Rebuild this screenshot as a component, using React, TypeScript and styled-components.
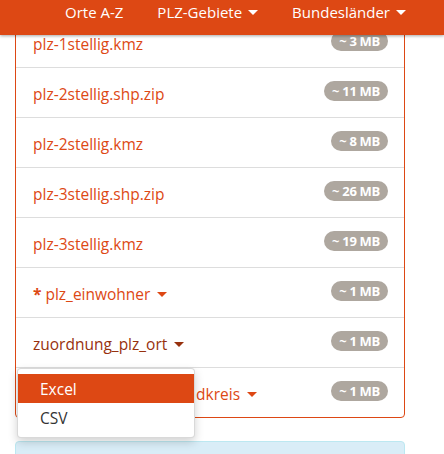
import styled, { createGlobalStyle } from "styled-components";

const GlobalStyle = createGlobalStyle`
    html, body {
        margin: 0;
        padding: 0;
        overflow: hidden;
        background: #fff;
    }
    body {
        font-family: "Open Sans", "DejaVu Sans", sans-serif;
        font-size: 15.5px;
    }
`

const Page = styled.div`
    position: relative;
    width: 444px;
    height: 454px;
    overflow: hidden;
`

const Navbar = styled.nav`
    position: absolute;
    top: 0;
    left: 0;
    right: 0;
    height: 35px;
    background: #dd4814;
    box-shadow: 0 1px 3px rgba(0, 0, 0, 0.35);
    display: flex;
    justify-content: flex-end;
    align-items: center;
    padding-right: 38px;
    gap: 34px;
    z-index: 10;
`

const NavItem = styled.a`
    color: #fff;
    font-size: 15px;
    font-weight: 500;
    display: flex;
    align-items: center;
    gap: 6px;
    margin-top: -11px;
`

const Caret = styled.span<{ $color: string }>`
    display: inline-block;
    width: 0;
    height: 0;
    border-top: 5px solid ${p => p.$color};
    border-left: 5px solid transparent;
    border-right: 5px solid transparent;
`

const Content = styled.div`
    padding: 17px 39px 0 15px;
    display: flex;
    flex-direction: column;
    gap: 23px;
`

const Panel = styled.div`
    border: 1px solid #dd4814;
    border-radius: 0 0 4px 4px;
`

const Row = styled.div`
    position: relative;
    height: 49px;
    padding: 0 16px 0 17px;
    display: flex;
    align-items: center;
    justify-content: space-between;

    & + & {
        border-top: 1px solid #dddddd;
    }
`

const FileLink = styled.a<{ $active?: boolean }>`
    color: ${p => p.$active ? "#97310e" : "#dd4814"};
    display: flex;
    align-items: center;
    gap: 7px;
    margin-top: 3px;
`

const Star = styled.b`
    margin-right: -3px;
`

const Badge = styled.span`
    background: #aea79f;
    color: #fff;
    font-size: 13px;
    font-weight: 700;
    border-radius: 10px;
    height: 20px;
    padding: 0 8px;
    display: flex;
    align-items: center;
    margin-top: -4px;
    letter-spacing: -0.3px;
`

const Menu = styled.ul`
    position: absolute;
    left: 1px;
    top: 50px;
    width: 176px;
    margin: 0;
    padding: 5px 0;
    list-style: none;
    background: #fff;
    border: 1px solid rgba(0, 0, 0, 0.15);
    border-radius: 4px;
    box-shadow: 0 4px 10px rgba(0, 0, 0, 0.18);
    z-index: 5;
`

const MenuItem = styled.li<{ $active?: boolean }>`
    height: 29px;
    padding-left: 22px;
    display: flex;
    align-items: center;
    color: ${p => p.$active ? "#fff" : "#333"};
    background: ${p => p.$active ? "#dd4814" : "transparent"};
`

const Alert = styled.div`
    height: 40px;
    background: #d9edf7;
    border: 1px solid #bce8f1;
    border-radius: 4px;
`

type FileRow = {
    name: string,
    size: string,
    star?: boolean,
    dropdown?: boolean,
    active?: boolean,
}

const files: FileRow[] = [
    {name: "plz-1stellig.kmz", size: "~ 3 MB"},
    {name: "plz-2stellig.shp.zip", size: "~ 11 MB"},
    {name: "plz-2stellig.kmz", size: "~ 8 MB"},
    {name: "plz-3stellig.shp.zip", size: "~ 26 MB"},
    {name: "plz-3stellig.kmz", size: "~ 19 MB"},
    {name: "plz_einwohner", size: "~ 1 MB", star: true, dropdown: true},
    {name: "zuordnung_plz_ort", size: "~ 1 MB", dropdown: true, active: true},
    {name: "zuordnung_plz_ort_landkreis", size: "~ 1 MB", dropdown: true},
]

export default function App() {
    return (
        <Page>
            <GlobalStyle/>
            <Navbar>
                <NavItem>Orte A-Z</NavItem>
                <NavItem>PLZ-Gebiete <Caret $color="#fff"/></NavItem>
                <NavItem>Bundesländer <Caret $color="#fff"/></NavItem>
            </Navbar>

            <Content>
                <Panel>
                    {files.map(f =>
                        <Row key={f.name}>
                            <FileLink $active={f.active}>
                                {f.star && <Star>*</Star>}
                                <span>{f.name}</span>
                                {f.dropdown && <Caret $color={f.active ? "#97310e" : "#dd4814"}/>}
                            </FileLink>
                            <Badge>{f.size}</Badge>
                            {f.active && <Menu>
                                <MenuItem $active>Excel</MenuItem>
                                <MenuItem>CSV</MenuItem>
                            </Menu>}
                        </Row>
                    )}
                </Panel>
                <Alert/>
            </Content>
        </Page>
    )
}
